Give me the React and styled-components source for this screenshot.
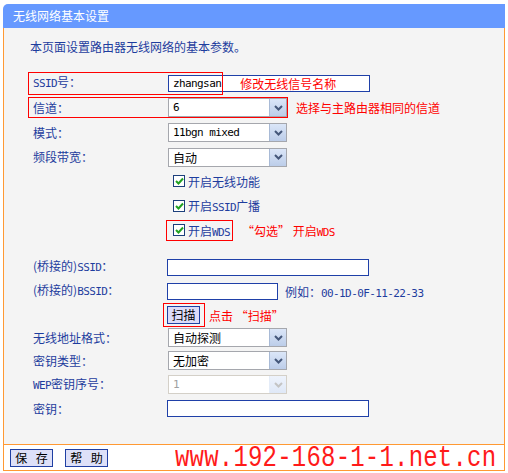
import React from "react";
import styled, { createGlobalStyle } from "styled-components";

const GlobalStyle = createGlobalStyle`
  body {
    margin: 0;
    background: #fff;
    font-family: "Noto Sans CJK SC", sans-serif;
    font-size: 12px;
  }
`;

const NAVY = "#1e3d9e";
const RED = "#ff0000";

const Frame = styled.div`
  width: 502px;
  margin: 4px 0 0 3px;
`;

const Header = styled.div`
  height: 24px;
  line-height: 23px;
  background: #6699ff;
  border-radius: 5px 0 0 0;
  color: #fff;
  padding-left: 10px;
`;

const Body = styled.div`
  height: 416px;
  box-sizing: border-box;
  border-left: 1px solid #ff9933;
  border-right: 1px solid #ff9933;
  background: #f4f4f4;
  padding-top: 11px;
`;

const Intro = styled.p`
  margin: 0 0 16px 26px;
  line-height: 16px;
  color: ${NAVY};
`;

const Row = styled.div`
  position: relative;
  display: grid;
  grid-template-columns: 134px 1fr;
  align-items: center;
  height: ${(p) => p.$h}px;
  padding-left: 29px;
  margin-top: ${(p) => p.$mt || 0}px;
`;

const Label = styled.div`
  color: ${NAVY};
  white-space: nowrap;
  line-height: 16px;
`;

const Cell = styled.div`
  display: flex;
  align-items: center;
`;

const Latin = styled.span`
  font-family: "DejaVu Sans Mono", monospace;
  font-size: 11px;
  letter-spacing: -0.6px;
  color: ${(p) => p.$color || "inherit"};
`;

const TextBox = styled.div`
  width: ${(p) => p.$w}px;
  height: 17px;
  box-sizing: border-box;
  border: 1px solid #1f40a8;
  background: #fff;
  display: flex;
  align-items: center;
  padding-left: 4px;
  margin-left: ${(p) => p.$ml || 0}px;
`;

const SelectBox = styled.div`
  width: 119px;
  height: 19px;
  box-sizing: border-box;
  border: 1px solid ${(p) => (p.$disabled ? "#d4d0c8" : "#a5a7ad")};
  background: #fff;
  display: flex;
  margin-left: 1px;
`;

const SelectValue = styled.div`
  flex: 1;
  display: flex;
  align-items: center;
  padding-left: 4px;
  color: ${(p) => (p.$disabled ? "#a0a0a0" : "#000")};
`;

const ArrowButton = styled.div`
  width: 16px;
  display: flex;
  align-items: center;
  justify-content: center;
  border-left: 1px solid ${(p) => (p.$disabled ? "#e4ecf8" : "#a8bad6")};
  background: ${(p) =>
    p.$disabled
      ? "linear-gradient(#eef3fc, #dfe8f7)"
      : "linear-gradient(#dbe6f8, #bccde9)"};
`;

const Note = styled.span`
  color: ${RED};
  margin-left: ${(p) => p.$ml || 0}px;
  white-space: nowrap;
`;

const Hint = styled.span`
  color: ${NAVY};
  margin-left: 7px;
  white-space: nowrap;
`;

const RedBox = styled.div`
  position: absolute;
  left: ${(p) => p.$l}px;
  top: ${(p) => p.$t}px;
  width: ${(p) => p.$w}px;
  height: ${(p) => p.$hh}px;
  border: 1px solid ${RED};
  box-sizing: border-box;
  pointer-events: none;
`;

const Check = styled.label`
  display: flex;
  align-items: center;
  gap: 3px;
  margin-left: 6px;
  color: ${NAVY};
  white-space: nowrap;
`;

const Box = styled.span`
  width: 12px;
  height: 12px;
  box-sizing: border-box;
  border: 1px solid #1c3f7c;
  background: #fff;
  display: flex;
  align-items: center;
  justify-content: center;
`;

const ScanButton = styled.button`
  width: 33px;
  height: 18px;
  padding: 0;
  border: 1px solid #1f3fa3;
  background: #dcdcf8;
  font: inherit;
  color: #000;
  line-height: 14px;
`;

const Footer = styled.div`
  height: 27px;
  box-sizing: border-box;
  border: 1px solid #ff9933;
  background: #fff;
  display: flex;
  align-items: center;
  padding-left: 6px;
  gap: 12px;
`;

const FootButton = styled.button`
  width: 43px;
  height: 18px;
  padding: 0;
  border: 1px solid #1f3fa3;
  background: #dde0f8;
  font: inherit;
  color: #000;
  word-spacing: 6px;
  line-height: 14px;
`;

const WebMark = styled.span`
  display: inline-block;
  flex: none;
  margin-left: 55px;
  font-family: "Liberation Mono", "Courier New", monospace;
  font-size: 24px;
  line-height: 18px;
  letter-spacing: 0.2px;
  color: #ff1a1a;
  transform: scaleY(1.25);
  white-space: nowrap;
`;

function Chevron({ disabled }) {
  return (
    <svg width="9" height="6" viewBox="0 0 9 6">
      <path
        d="M1 1 L4.5 4.5 L8 1"
        fill="none"
        stroke={disabled ? "#c4c4c4" : "#45577a"}
        strokeWidth="2"
      />
    </svg>
  );
}

function Select({ children, disabled }) {
  return (
    <SelectBox $disabled={disabled}>
      <SelectValue $disabled={disabled}>{children}</SelectValue>
      <ArrowButton $disabled={disabled}>
        <Chevron disabled={disabled} />
      </ArrowButton>
    </SelectBox>
  );
}

function CheckItem({ children }) {
  return (
    <Check>
      <Box>
        <svg width="9" height="8" viewBox="0 0 9 8">
          <path d="M1 4 L3.5 6.5 L8 1.5" fill="none" stroke="#21a121" strokeWidth="2" />
        </svg>
      </Box>
      <span>{children}</span>
    </Check>
  );
}

export default function App() {
  return (
    <>
      <GlobalStyle />
      <Frame>
        <Header>无线网络基本设置</Header>
        <Body>
          <Intro>本页面设置路由器无线网络的基本参数。</Intro>

          <Row $h={24}>
            <Label>
              <Latin>SSID</Latin>号：
            </Label>
            <Cell>
              <TextBox $w={202} $ml={1}>
                <Latin $color="#000">zhangsan</Latin>
                <Note $ml={19}>修改无线信号名称</Note>
              </TextBox>
            </Cell>
            <RedBox $l={24} $t={1} $w={195} $hh={23} />
          </Row>

          <Row $h={25}>
            <Label>信道：</Label>
            <Cell>
              <Select>
                <Latin>6</Latin>
              </Select>
              <Note $ml={9}>选择与主路由器相同的信道</Note>
            </Cell>
            <RedBox $l={24} $t={2} $w={260} $hh={21} />
          </Row>

          <Row $h={25}>
            <Label>模式：</Label>
            <Cell>
              <Select>
                <Latin>11bgn mixed</Latin>
              </Select>
            </Cell>
          </Row>

          <Row $h={24}>
            <Label>频段带宽：</Label>
            <Cell>
              <Select>自动</Select>
            </Cell>
          </Row>

          <Row $h={24}>
            <Label />
            <Cell>
              <CheckItem>开启无线功能</CheckItem>
            </Cell>
          </Row>

          <Row $h={25}>
            <Label />
            <Cell>
              <CheckItem>
                开启<Latin>SSID</Latin>广播
              </CheckItem>
            </Cell>
          </Row>

          <Row $h={24}>
            <Label />
            <Cell>
              <CheckItem>
                开启<Latin>WDS</Latin>
              </CheckItem>
              <Note $ml={12}>
                “勾选” 开启<Latin>WDS</Latin>
              </Note>
            </Cell>
            <RedBox $l={162} $t={2} $w={67} $hh={21} />
          </Row>

          <Row $h={24} $mt={13}>
            <Label>
              (桥接的)<Latin>SSID</Latin>：
            </Label>
            <Cell>
              <TextBox $w={202} />
            </Cell>
          </Row>

          <Row $h={24}>
            <Label>
              (桥接的)<Latin>BSSID</Latin>：
            </Label>
            <Cell>
              <TextBox $w={111} />
              <Hint>
                例如：<Latin>00-1D-0F-11-22-33</Latin>
              </Hint>
            </Cell>
          </Row>

          <Row $h={24}>
            <Label />
            <Cell>
              <ScanButton>扫描</ScanButton>
              <Note $ml={9}>点击 “扫描”</Note>
            </Cell>
            <RedBox $l={159} $t={0} $w={42} $hh={24} />
          </Row>

          <Row $h={21}>
            <Label>无线地址格式：</Label>
            <Cell>
              <Select>自动探测</Select>
            </Cell>
          </Row>

          <Row $h={25}>
            <Label>密钥类型：</Label>
            <Cell>
              <Select>无加密</Select>
            </Cell>
          </Row>

          <Row $h={23}>
            <Label>
              <Latin>WEP</Latin>密钥序号：
            </Label>
            <Cell>
              <Select disabled>
                <Latin>1</Latin>
              </Select>
            </Cell>
          </Row>

          <Row $h={25}>
            <Label>密钥：</Label>
            <Cell>
              <TextBox $w={202} />
            </Cell>
          </Row>
        </Body>
        <Footer>
          <FootButton>保 存</FootButton>
          <FootButton>帮 助</FootButton>
          <WebMark>www.192-168-1-1.net.cn</WebMark>
        </Footer>
      </Frame>
    </>
  );
}
